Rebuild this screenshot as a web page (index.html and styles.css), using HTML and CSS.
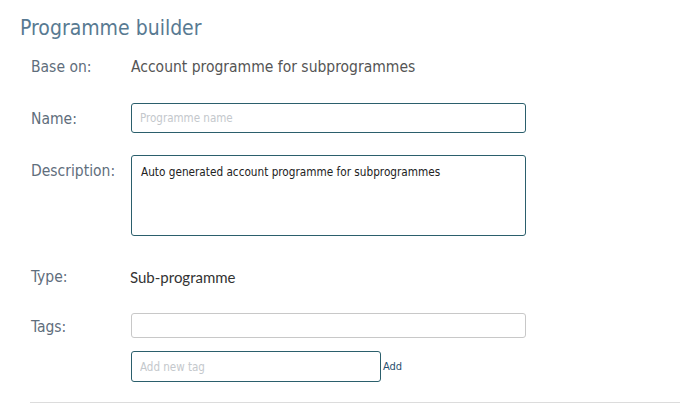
FILE: index.html
```html
<!DOCTYPE html>
<html>
<head>
<meta charset="utf-8">
<link rel="stylesheet" href="styles.css">
</head>
<body>
<div class="page">
  <h1 class="title">Programme builder</h1>
  <div class="form">
    <div class="row row-base">
      <div class="label">Base on:</div>
      <div class="value">Account programme for subprogrammes</div>
    </div>
    <div class="row row-name">
      <div class="label">Name:</div>
      <div class="field"><input class="input input-name" type="text" placeholder="Programme name"></div>
    </div>
    <div class="row row-desc">
      <div class="label">Description:</div>
      <div class="field"><textarea class="textarea">Auto generated account programme for subprogrammes</textarea></div>
    </div>
    <div class="row row-type">
      <div class="label">Type:</div>
      <div class="value value-type">Sub-programme</div>
    </div>
    <div class="row row-tags">
      <div class="label">Tags:</div>
      <div class="field tags-field">
        <div class="tags-box"></div>
        <div class="add-row">
          <input class="input input-tag" type="text" placeholder="Add new tag">
          <a class="add-link">Add</a>
        </div>
      </div>
    </div>
  </div>
  <hr class="divider">
</div>
</body>
</html>
```
FILE: styles.css
```css
html, body {
  margin: 0;
  padding: 0;
  background: #fff;
}
body {
  font-family: "DejaVu Sans Condensed", "DejaVu Sans", sans-serif;
  font-stretch: condensed;
  color: #555;
}
.page {
  padding: 0 0 0 20px;
}
.title {
  margin: 0;
  padding-top: 15px;
  font-size: 21px;
  font-weight: normal;
  color: #587a92;
  line-height: 26px;
}
.form {
  padding-left: 11px;
  margin-top: 16px;
}
.row {
  display: flex;
  align-items: flex-start;
}
.label {
  width: 100px;
  flex: none;
  font-size: 15.5px;
  color: #5f6e7c;
  line-height: 20px;
}
.value {
  font-size: 15.5px;
  color: #555;
  line-height: 20px;
}
.row-name { margin-top: 26px; }
.row-name .label { padding-top: 6px; }
.input {
  box-sizing: border-box;
  font-family: inherit;
  font-stretch: condensed;
  border: 1px solid #2b5f6c;
  border-radius: 3px;
  outline: none;
  padding: 0 8px;
  font-size: 11.5px;
  color: #333;
  background: #fff;
  margin: 0;
}
.input::placeholder { color: #c4c8cc; }
.input-name {
  display: block;
  width: 395px;
  height: 30px;
}
.row-desc { margin-top: 22px; }
.row-desc .label { padding-top: 6px; }
.textarea {
  box-sizing: border-box;
  display: block;
  width: 395px;
  height: 81px;
  border: 1px solid #2b5f6c;
  border-radius: 3px;
  padding: 8px 9px;
  font-family: inherit;
  font-stretch: condensed;
  font-size: 11.7px;
  line-height: 16px;
  color: #222;
  resize: none;
  outline: none;
  margin: 0;
}
.row-type { margin-top: 31px; }
.value-type {
  font-family: Lato, sans-serif;
  font-stretch: normal;
  font-size: 15px;
  color: #333;
  margin-left: -1px;
}
.row-tags { margin-top: 26px; }
.row-tags .label { padding-top: 4px; }
.tags-box {
  box-sizing: border-box;
  width: 395px;
  height: 25px;
  border: 1px solid #c8c8c8;
  border-radius: 3px;
}
.add-row {
  display: flex;
  align-items: center;
  margin-top: 13px;
}
.input-tag {
  width: 250px;
  height: 31px;
}
.add-link {
  font-size: 11px;
  color: #2a4f6e;
  margin-left: 2px;
}
.divider {
  margin: 20px 0 0 10px;
  border: 0;
  border-top: 1px solid #dcdcdc;
  height: 0;
}
```
